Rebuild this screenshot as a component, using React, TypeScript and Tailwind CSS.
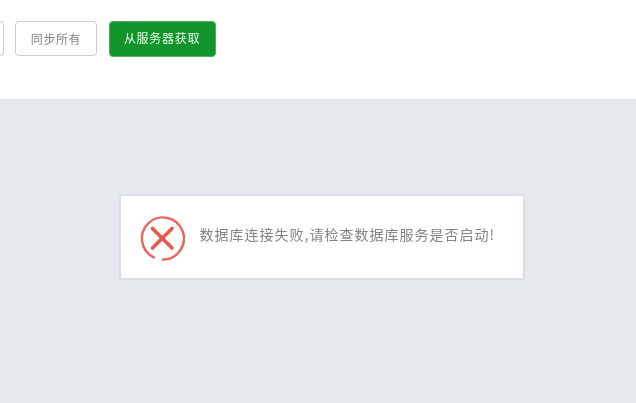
import React from "react";

const cjk = "font-['Noto_Sans_CJK_SC','Liberation_Sans',sans-serif]";

export default function App() {
  return (
    <div className={`w-[636px] h-[403px] flex flex-col bg-white overflow-hidden ${cjk}`}>
      <div className="h-[99px] shrink-0 flex items-start gap-3 pt-[21px] -ml-[69px]">
        <button className="w-[73px] h-[35px] rounded-[4px] border-[1.5px] border-[#cbcbcb] bg-white"></button>
        <button className="w-[82px] h-[35px] -ml-[1px] rounded-[4px] border-[1.5px] border-[#cbcbcb] bg-white text-[#858585] text-[12px] tracking-[0.6px] font-normal leading-none">
          <span className="block blur-[0.5px]">同步所有</span>
        </button>
        <button className="w-[107px] h-[36px] -mt-[0.5px] rounded-[4px] border border-[#5aa868] bg-[#12962b] text-[#eef8f0] text-[12px] tracking-[0.7px] font-normal leading-none">
          <span className="block blur-[0.5px] -mt-[2px] -ml-[1px]">从服务器获取</span>
        </button>
      </div>
      <div className="flex-1 bg-[#e5e8ed] flex justify-center pt-[95px] pl-[8px]">
        <div className="w-[406px] h-[86px] -ml-[1px] bg-white border-2 border-[#dcdee3] rounded-[3px] flex items-center pl-[19px] gap-[13px]">
          <svg width="46" height="46" viewBox="0 0 46 46" className="shrink-0 mt-[2px] -ml-[0.5px] blur-[0.5px]" fill="none">
            <path d="M15 42.5A21 21 0 1 1 24 44.5" stroke="#e8685f" strokeWidth="2.4" strokeLinecap="round" />
            <path d="M13.5 13.5 L33 33 M33 13.5 L13.5 33" stroke="#e9564c" strokeWidth="3.6" strokeLinecap="round" />
          </svg>
          <span className="ml-[1.5px] text-[#848484] text-[14px] tracking-[1px] font-normal leading-none whitespace-nowrap -mt-[7px] blur-[0.6px]">
            数据库连接失败,请检查数据库服务是否启动!
          </span>
        </div>
      </div>
    </div>
  );
}
